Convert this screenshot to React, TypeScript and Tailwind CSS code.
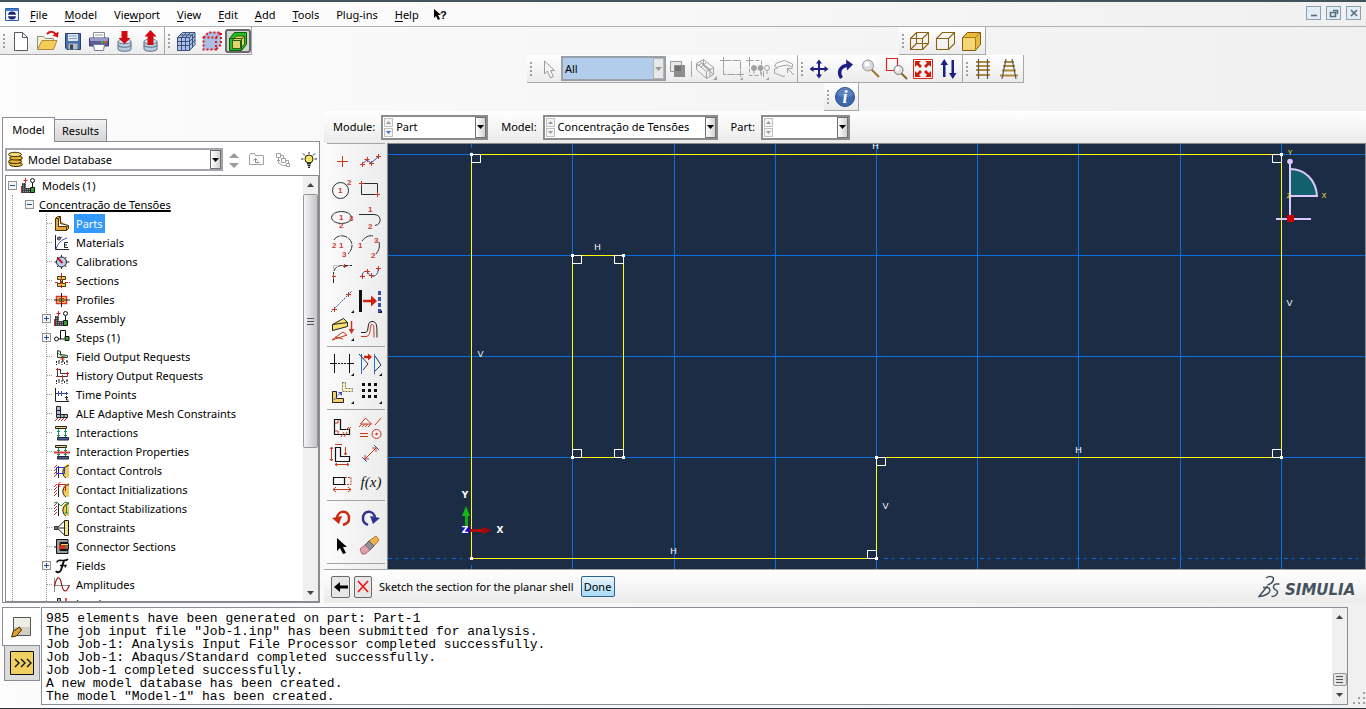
import React from "react";

type IconProps = { children: React.ReactNode; size?: number; className?: string };

function Pic({ children, size = 24, className = "" }: IconProps) {
  return (
    <svg
      width={size}
      height={size}
      viewBox={`0 0 ${size} ${size}`}
      fill="none"
      stroke="none"
      aria-hidden="true"
      className={`shrink-0 ${className}`}
    >
      {children}
    </svg>
  );
}

/* ---------- shared bits ---------- */

function Grip() {
  return (
    <span className="flex w-2 shrink-0 flex-col items-center justify-center gap-[2px]">
      <i className="size-[2px] bg-[#a0a0a0]" />
      <i className="size-[2px] bg-[#a0a0a0]" />
      <i className="size-[2px] bg-[#a0a0a0]" />
      <i className="size-[2px] bg-[#a0a0a0]" />
    </span>
  );
}

type Tool = { name: string; icon: React.ReactNode; pressed?: boolean };

function ToolButton({ tool }: { tool: Tool }) {
  return (
    <button
      type="button"
      title={tool.name}
      aria-label={tool.name}
      className={
        tool.pressed
          ? "flex h-6 w-[26px] items-center justify-center rounded-[3px] border-2 border-[#6a6a6a] bg-[#d4d4d4]"
          : "flex h-6 w-[26px] items-center justify-center"
      }
    >
      <Pic className="shrink-0">{tool.icon}</Pic>
    </button>
  );
}

function ToolGroup({ tools, children }: { tools: Tool[]; children?: React.ReactNode }) {
  return (
    <div className="flex h-7 items-center border-r border-b border-[#a8a8a8] bg-gradient-to-b from-white to-[#ebebeb]">
      <Grip />
      {children}
      {tools.map((t) => (
        <ToolButton key={t.name} tool={t} />
      ))}
    </div>
  );
}

function DropArrow({ muted = false }: { muted?: boolean }) {
  return (
    <span
      className={
        muted
          ? "flex w-[11px] shrink-0 items-center justify-center border border-[#b5b5b5] bg-[#e8e8e8]"
          : "flex w-[11px] shrink-0 items-center justify-center border border-[#707070] bg-gradient-to-r from-white to-[#d2d2d2]"
      }
    >
      <svg width="7" height="4" viewBox="0 0 7 4" aria-hidden="true">
        <path d="M0 0h7L3.500 4z" fill={muted ? "#9a9a9a" : "#000"} />
      </svg>
    </span>
  );
}

function Spinner({ active = false }: { active?: boolean }) {
  return (
    <span className="my-[1px] ml-[1px] flex w-[9px] shrink-0 flex-col gap-[1px]">
      <span className="flex flex-1 items-center justify-center border border-[#c0c0c0] bg-[#f4f4f4]">
        <svg width="5" height="3" aria-hidden="true">
          <path d="M0 3h5L2.500 0z" fill="#9a9a9a" />
        </svg>
      </span>
      <span className="flex flex-1 items-center justify-center border border-[#c0c0c0] bg-[#f4f4f4]">
        <svg width="5" height="3" aria-hidden="true">
          <path d="M0 0h5L2.500 3z" fill={active ? "#3d6fd0" : "#9a9a9a"} />
        </svg>
      </span>
    </span>
  );
}

/* ---------- toolbar icons ---------- */

const cubeWire = (
  <g stroke="#8a6210" strokeWidth="1.1">
    <path d="M2.500 9.500h12v11h-12zM8.500 3.500h12v11h-12zM2.500 9.500l6-6M14.500 9.500l6-6M2.500 20.500l6-6M14.500 20.500l6-6" />
  </g>
);
const cubeHidden = (
  <g stroke="#8a6210" strokeWidth="1.1">
    <path d="M2.500 9.500h12v11h-12zM2.500 9.500l6-6h12v11l-6 6M14.500 9.500l6-6" />
  </g>
);
const database = (
  <>
    <path d="M5 13v7c0 3 13 3 13 0v-7z" fill="#b9cde0" />
    <ellipse cx="11.500" cy="12.500" rx="6.500" ry="2.300" fill="#dde8f2" stroke="#6d8296" />
    <path d="M5 12.500v7.500c0 3 13 3 13 0v-7.500M5 16c0 3 13 3 13 0" stroke="#5b6f82" />
  </>
);

const fileTools: Tool[] = [
  {
    name: "New",
    icon: <path d="M5.500 3.500h8l5 5v13h-13zM13.500 3.500v5h5" fill="#fff" stroke="#5c5c66" />,
  },
  {
    name: "Open",
    icon: (
      <>
        <path d="M2.500 20V7.500h6l2 2h8V13" fill="#fdf3cf" stroke="#8c8c8c" />
        <path d="M2.500 20.500l4.500-9h15l-3.500 9z" fill="#f5cd55" stroke="#a98e43" />
        <path d="M12 5c3-3 7-3 9 1" stroke="#d11" strokeWidth="2" />
        <path d="M17.500 6.500l5.500 2 .5-6z" fill="#d11" />
      </>
    ),
  },
  {
    name: "Save",
    icon: (
      <>
        <path d="M4.500 4.500h15v16H6l-1.500-1.500z" fill="#4a6ea8" stroke="#27406c" />
        <path d="M7 5h10v7H7z" fill="#dfe8f0" />
        <path d="M8 7h8M8 9.500h8" stroke="#8ba0b8" />
        <path d="M7.500 14.500h9v6h-9z" fill="#b5bcc4" />
        <path d="M9 15.500h3v5H9z" fill="#39434f" />
      </>
    ),
  },
  {
    name: "Print",
    icon: (
      <>
        <path d="M6.500 3.500h11v6h-11z" fill="#fff" stroke="#8c8c96" />
        <path d="M8 6h8" stroke="#999" />
        <path d="M2.500 9h19v8h-19z" fill="#5a5c9c" stroke="#3a3b72" />
        <path d="M3 9h18v3H3z" fill="#9a9bc8" />
        <path d="M14 13h2" stroke="#2c2" strokeWidth="2" />
        <path d="M17 13h2" stroke="#f50" strokeWidth="2" />
        <path d="M6.500 15.500h11l-1 6h-9z" fill="#fff" stroke="#77779a" />
      </>
    ),
  },
  {
    name: "Open session",
    icon: (
      <>
        {database}
        <path d="M8.500 2h6v7h3l-6 6-6-6h3z" fill="#d40a12" />
      </>
    ),
  },
  {
    name: "Save session",
    icon: (
      <>
        {database}
        <path d="M11.500 1l6 6.500h-3V16h-6V7.500h-3z" fill="#d40a12" />
      </>
    ),
  },
];

const meshTools: Tool[] = [
  {
    name: "Mesh solid",
    icon: (
      <>
        <path d="M3 8.500l5-5h13v12l-5 6H3z" fill="#a9c1ea" />
        <path
          d="M3.500 8.500h12v13h-12zM3.500 8.500l5-5h12.500v12l-5.500 6M15.500 8.500l5.500-5M7.500 8.500v13M11.500 8.500v13M3.500 12.500h12l5.500-5.500M3.500 16.500h12l5.500-5.500M7.500 8.500l5-5M11.500 8.500l5-5M6 6h12.500v12.500"
          stroke="#30446e"
          strokeWidth=".9"
        />
      </>
    ),
  },
  {
    name: "Mesh nodes",
    icon: (
      <>
        <path d="M3 8l5-5h13v12l-5 6H3z" fill="#a9bfe8" />
        <path
          d="M3.500 8.500h12.500v12h-12.500zM3.500 8.500l5-5h12.500v12l-5 5M16 8.500l5-5"
          stroke="#e01818"
          strokeWidth="2"
          strokeDasharray="2 2"
        />
      </>
    ),
  },
  {
    name: "Perspective cube",
    pressed: true,
    icon: (
      <>
        <path d="M3.500 9.500l5-6h12v12l-5 6h-12z" fill="#1fc01f" stroke="#0a5a0a" />
        <path d="M6.500 11.500l4-4.500h8v8l-4 4.500h-8z" fill="#e3d46c" stroke="#3a5a10" />
        <path d="M6.500 11.500h8v8M14.500 11.500l4-4.500M3.500 9.500h12v12" stroke="#245a12" />
      </>
    ),
  },
];

const renderTools: Tool[] = [
  { name: "Wireframe", icon: cubeWire },
  { name: "Hidden", icon: cubeHidden },
  {
    name: "Shaded",
    icon: (
      <>
        <path d="M2.500 8.500l5-5h13v12l-5 6h-13z" fill="#e8b93c" stroke="#7d5a10" />
        <path d="M3 9h12v12H3z" fill="#f6d672" />
        <path d="M2.500 8.500h13v13M15.500 8.500l5-5" stroke="#a87a1c" />
      </>
    ),
  },
];

const selectionTools: Tool[] = [
  {
    name: "Select edges",
    icon: (
      <g stroke="#a2a2a2">
        <path d="M2.500 6.500l7-4 10 8v7l-7 4-10-9z" />
        <path d="M2.500 6.500l10 8 7-4M12.500 14.500v7M6 4.500l10 8v7M2.500 9.500l5-3 9 7M9.500 2.500v6l10 9M7 10l5-4" />
        <path d="M23 19v4h-4z" fill="#a2a2a2" stroke="none" />
      </g>
    ),
  },
  {
    name: "Drag rectangle",
    icon: (
      <g stroke="#a2a2a2">
        <path d="M3.500 3.500h17v14h-17z" strokeDasharray="8 1" />
        <path d="M0 3.500h6M3.500 0v7M17 17.500h7M20.500 14v6" />
        <path d="M23 20v3h-3z" fill="#a2a2a2" stroke="none" />
      </g>
    ),
  },
  {
    name: "Select inside",
    icon: (
      <g stroke="#a2a2a2">
        <path d="M3.500 3.500h12v15h-12z" strokeDasharray="4 2" />
        <path d="M0 3.500h6M3.500 0v7M17.500 14v6" />
        <circle cx="8" cy="11" r="2.500" fill="#a2a2a2" />
        <circle cx="14.500" cy="11" r="2.500" fill="#a2a2a2" />
        <circle cx="21" cy="11" r="2.500" />
        <path d="M8 13v4M14.500 13v4M21 14v3" />
        <path d="M23 20v3h-3z" fill="#a2a2a2" stroke="none" />
      </g>
    ),
  },
  {
    name: "Pick from view",
    icon: (
      <g stroke="#a2a2a2">
        <path d="M11 19.500l-8.500-3.500v-4l3-1-3-2 2-3 8-2.500 8 3.500v3l-6-2-9 2M11 19.500l2-1" />
        <path d="M22 18l-6-6M15.500 16v-4.500h5" />
      </g>
    ),
  },
];

const viewTools: Tool[] = [
  {
    name: "Pan",
    icon: (
      <g fill="#1b1f86">
        <path d="M11 5h2v14h-2z" />
        <path d="M5 11h14v2H5z" />
        <path d="M12 2.500l3 4H9zM12 21.500l3-4H9zM2.500 12l4-3v6zM21.500 12l-4-3v6z" />
      </g>
    ),
  },
  {
    name: "Rotate",
    icon: (
      <>
        <path d="M8.500 21c-4-6-1.500-12 7-13" stroke="#1b1f86" strokeWidth="3.500" />
        <path d="M13 2.500l7 5-6 6z" fill="#1b1f86" />
      </>
    ),
  },
  {
    name: "Magnify",
    icon: (
      <>
        <path d="M12 12l8 8" stroke="#a07428" strokeWidth="2" />
        <circle cx="9" cy="8.500" r="5.500" fill="#dadada" stroke="#9a9a9a" />
        <circle cx="8" cy="7" r="2.500" fill="#fff" />
      </>
    ),
  },
  {
    name: "Box zoom",
    icon: (
      <>
        <path d="M1.500 1.500h11v12h-11z" stroke="#e0281c" strokeWidth="1.200" />
        <path d="M16 16l6 6" stroke="#8a6424" strokeWidth="2" />
        <circle cx="13.500" cy="13" r="4.500" fill="#e2e2e2" stroke="#777" />
        <circle cx="12.500" cy="12" r="2" fill="#fff" />
      </>
    ),
  },
  {
    name: "Auto fit",
    icon: (
      <>
        <path d="M2.500 2.500h19v19h-19z" stroke="#d32a1c" />
        <path
          d="M4 4h6L8 6l3 3-2 2-3-3-2 2zM20 4h-6l2 2-3 3 2 2 3-3 2 2zM4 20h6l-2-2 3-3-2-2-3 3-2-2zM20 20h-6l2-2-3-3 2-2 3 3 2-2z"
          fill="#cf1a0c"
        />
      </>
    ),
  },
  {
    name: "Cycle views",
    icon: (
      <g fill="#1b1f86">
        <path d="M6 6h2.500v14H6z" />
        <path d="M7.250 2l3.750 6h-7.500z" />
        <path d="M14.500 3H17v14h-2.500z" />
        <path d="M15.750 22l3.750-6H12z" />
      </g>
    ),
  },
];

const projectionTools: Tool[] = [
  {
    name: "Parallel",
    icon: (
      <>
        <path d="M4 5h14M4 9h14M4 13h14M4 18h14" stroke="#b08a3c" strokeWidth="2" />
        <path d="M6.500 2v20M15.500 2v20" stroke="#555" strokeWidth="1.200" />
      </>
    ),
  },
  {
    name: "Perspective",
    icon: (
      <>
        <path d="M6 5h10M5 9h12M4 13.500h14M2 18.500h18" stroke="#b08a3c" strokeWidth="2" />
        <path d="M8 2L4 22M14 2l4 20" stroke="#555" strokeWidth="1.200" />
      </>
    ),
  },
];

const infoTools: Tool[] = [
  {
    name: "Query information",
    icon: (
      <>
        <circle cx="12" cy="12" r="9.500" fill="#3f69ae" stroke="#2b4b88" />
        <path d="M4 10a8 7 0 0116 0c-4 3-12 3-16 0z" fill="#5b80c0" />
        <text
          x="12"
          y="18"
          textAnchor="middle"
          fill="#fff"
          fontSize="18"
          fontStyle="italic"
          fontWeight="bold"
          fontFamily="Liberation Serif, serif"
        >
          i
        </text>
      </>
    ),
  },
];

/* ---------- model tree ---------- */

const asm = (
  <>
    <path d="M1 5h4v5h5v5H1z" fill="#8a8a92" />
    <path d="M1.500 5v10M3.500 5v10M5.500 10v5M7.500 10v5M9.500 11v4M1 6.500h4M1 8.500h4M1 10.500h9M1 12.500h9M1 14.500h9" stroke="#33333a" strokeWidth=".8" />
    <path d="M4.500 0v5M2.500 2.500h4M.5 8v7" stroke="#c22" />
    <circle cx="11.500" cy="2.500" r="2" stroke="#111" />
    <path d="M11.500 5v5" stroke="#111" />
    <path d="M9.500 9.500h4v5h-4z" fill="#37a02a" stroke="#111" />
  </>
);
const contact = (
  <>
    <path d="M15 1c-9 1-9 14 0 14z" fill="#f1cc58" />
    <path d="M15 2.500c-7 1-8 10-3 12.500M4.500 3v12" stroke="#222" />
    <path d="M0 5l3-3M0 8l3-3M0 11l3-3M0 14l3-3" stroke="#b33" />
  </>
);
const inter = (
  <>
    <path d="M1.500 1.500h11v2h-11z" fill="#f0d878" stroke="#222" />
    <path d="M3.500 12.500h11v2.500h-11z" fill="#4760a8" stroke="#222" />
    <path d="M4.500 4v8M11.500 4v8M3 6.500h3M10 6.500h3M3 10.500h3M10 10.500h3" stroke="#169060" />
  </>
);
const requests = (
  <path d="M4 12h2M8 12h2M12 12h2M2.500 12v4M5 13v3M8 12v4M10.500 13v3M13 12v4" stroke="#222" strokeDasharray="2 1" />
);

type Node = { label: string; icon: React.ReactNode; expandable?: boolean; selected?: boolean };

const nodes: Node[] = [
  {
    label: "Parts",
    selected: true,
    icon: (
      <path
        d="M1.500 2.500l2-2h3v7l8 2v3l-2 2H1.500zM1.500 2.500h3v8h8l2-1M4.500 2.500l2-2M12.500 10.500v4"
        fill="#e2a63c"
        stroke="#4a3208"
      />
    ),
  },
  {
    label: "Materials",
    icon: (
      <>
        <path d="M1.500 0v14.500H15" stroke="#223" />
        <path d="M2 14C4 8 7 5 13 3M3 4l5-2" stroke="#3c50a8" />
        <circle cx="5" cy="3.500" r="1.500" stroke="#222" />
        <path d="M14 7.500h-3.500v5H14M10.500 10H13" stroke="#222" />
      </>
    ),
  },
  {
    label: "Calibrations",
    icon: (
      <>
        <circle cx="7.500" cy="8" r="5" fill="#b9cdf0" stroke="#222" />
        <path d="M7.500 1v2M7.500 13v2M.5 8h2M12.500 8h3M3 3l1.500 1.500M11 4.500L12.500 3M3 13l1.500-1.500M12.500 13L11 11.500" stroke="#222" />
        <path d="M3.500 4l5 5" stroke="#c81c1c" strokeWidth="2" />
      </>
    ),
  },
  {
    label: "Sections",
    icon: (
      <>
        <path d="M3.500 3.500h8v3h-3v4h3v3h-8v-3h3v-4h-3z" fill="#f0c84c" stroke="#4a3a10" />
        <path d="M7.500 0v16M11 9.500h5M1 9.500h3" stroke="#d02020" strokeDasharray="3 1" />
      </>
    ),
  },
  {
    label: "Profiles",
    icon: (
      <>
        <path d="M2.500 4.500h10v7h-10z" fill="#f4d878" stroke="#d83828" strokeWidth="1.500" />
        <path d="M7.500 1v14M0 8h16" stroke="#222" />
        <path d="M5 6.500h5v3H5z" stroke="#a85018" />
      </>
    ),
  },
  { label: "Assembly", icon: asm, expandable: true },
  {
    label: "Steps (1)",
    expandable: true,
    icon: (
      <>
        <circle cx="2.500" cy="9" r="2" stroke="#111" />
        <path d="M4.500 9h6M6.500 9V.5h5v7" stroke="#111" />
        <path d="M11 6.500h4v4h-4z" fill="#37a02a" stroke="#111" />
      </>
    ),
  },
  {
    label: "Field Output Requests",
    icon: (
      <>
        <path d="M3.500 1.500l3 1v3l7 1v2h-10z" fill="#f0f0f0" stroke="#333" />
        <path d="M4 4l3 3 5 1" stroke="#28a038" />
        <path d="M8.500 7v5M6.500 10h4" stroke="#d02020" />
        {requests}
      </>
    ),
  },
  {
    label: "History Output Requests",
    icon: (
      <>
        <path d="M3.500 1.500h3v4h7v3h-10z" stroke="#333" />
        <path d="M2 1.500h3M2 8.500h3M12 5.500h3M13.500 4v5M8.500 7v4M3.500 0v3" stroke="#d02020" />
        {requests}
      </>
    ),
  },
  {
    label: "Time Points",
    icon: (
      <>
        <path d="M1.500 1v13.500H15" stroke="#222" />
        <path d="M2 6.500h12M4.500 4v5M7.500 4v5M12.500 5v3" stroke="#3048b0" />
        <path d="M12.500 9v4h2M11 10.500h3" stroke="#222" />
      </>
    ),
  },
  {
    label: "ALE Adaptive Mesh Constraints",
    icon: (
      <>
        <path d="M2.500.5h4v8h7v3h-11z" fill="#a8bcd4" stroke="#222" />
        <path d="M2.500 4.500h4M2.500 8.500h4v3M10 8.500v3" stroke="#222" />
        <path d="M1 15l3-3M4 15l3-3M7 15l3-3M10 15l3-3" stroke="#c03030" />
      </>
    ),
  },
  { label: "Interactions", icon: inter },
  {
    label: "Interaction Properties",
    icon: (
      <>
        {inter}
        <path d="M0 8.500h16" stroke="#d23c3c" strokeWidth="2" />
      </>
    ),
  },
  {
    label: "Contact Controls",
    icon: (
      <>
        {contact}
        <path d="M2.500 4.500h8v6h-8z" stroke="#3434d0" />
      </>
    ),
  },
  {
    label: "Contact Initializations",
    icon: (
      <>
        {contact}
        <path d="M4 2.500h8M6.500 0L4 2.500 6.500 5M11.500 2v7" stroke="#d02020" />
      </>
    ),
  },
  {
    label: "Contact Stabilizations",
    icon: (
      <>
        {contact}
        <path d="M0 2l3-1 4 4 4-4 4 1M12.500 3v9M10.500 12h4" stroke="#189048" />
      </>
    ),
  },
  {
    label: "Constraints",
    icon: (
      <>
        <path d="M10.500.5h4v15h-4z" fill="#f6e27c" stroke="#222" />
        <path d="M10.500 1L3 8l7.500 7M3 8h8" stroke="#222" />
        <path d="M.5 6.500h3v3h-3z" fill="#8090a8" stroke="#222" />
      </>
    ),
  },
  {
    label: "Connector Sections",
    icon: (
      <>
        <path d="M14 .5H2.500v14H14v-3H6v-8h8v-3z" fill="#9a9ea6" stroke="#111" />
        <path d="M6.500 4.500h8v6h-8z" fill="#f0d078" stroke="#111" />
        <path d="M5 6h6v4H5z" fill="#d03018" />
        <path d="M0 8h3M11 7h4M11 9h4" stroke="#111" />
      </>
    ),
  },
  {
    label: "Fields",
    expandable: true,
    icon: (
      <>
        <path d="M3 4.500c0-3 4-2 6-2 3 0 4 0 5-1.500" stroke="#111" strokeWidth="1.600" />
        <path d="M10 2.500L7 12c-1 2.500-4 3-5 1" stroke="#111" strokeWidth="2" />
        <path d="M6 7.500h6l-1 2" stroke="#111" strokeWidth="1.300" />
      </>
    ),
  },
  {
    label: "Amplitudes",
    icon: (
      <>
        <path d="M.5 1v14M0 8.500h15" stroke="#8a8a8a" />
        <path d="M.5 9C3-2 6-1 7.500 7S12 17 15.500 8" stroke="#a02020" strokeWidth="1.300" />
      </>
    ),
  },
  {
    label: "Loads",
    icon: (
      <>
        <path d="M3.500 2.500h3v12h-3z" fill="#a8bcd4" stroke="#222" />
        <path d="M12 2v10M9 6h6" stroke="#d02020" strokeWidth="1.500" />
      </>
    ),
  },
];

function Expander({ open }: { open: boolean }) {
  return (
    <svg width="9" height="9" className="relative shrink-0" aria-hidden="true" shapeRendering="crispEdges">
      <path d="M.5.5h8v8h-8z" fill="#f4f4f4" stroke="#919191" />
      <path d={open ? "M2 4.500h5" : "M2 4.500h5M4.500 2v5"} stroke="#2a4a9a" />
    </svg>
  );
}

function ModelTree() {
  return (
    <div className="flex min-h-0 flex-1 border border-[#8a8a8a] bg-white">
      <ul role="tree" aria-label="Model tree" className="min-h-0 flex-1 overflow-hidden">
        <li role="treeitem" aria-expanded="true">
          <div className="flex h-[19px] items-center pl-[2px]">
            <Expander open />
            <Pic size={16} className="mr-[5px] ml-1">{asm}</Pic>
            <span>Models (1)</span>
          </div>
          <ul role="group" className="ml-[6px] border-l border-dotted border-[#9a9a9a]">
            <li role="treeitem" aria-expanded="true">
              <div className="flex h-[19px] items-center pl-3">
                <Expander open />
                <span className="ml-[5px] underline decoration-2 underline-offset-1 [text-decoration-skip-ink:none]">
                  Concentração de Tensões
                </span>
              </div>
              <ul role="group" className="ml-[33px] border-l border-dotted border-[#9a9a9a]">
                {nodes.map((n) => (
                  <li
                    key={n.label}
                    role="treeitem"
                    aria-selected={!!n.selected}
                    className="flex h-[19px] items-center"
                  >
                    <span className="-ml-[5px] flex w-3 items-center">
                      {n.expandable ? (
                        <Expander open={false} />
                      ) : (
                        <i className="ml-[5px] w-[5px] border-t border-dotted border-[#9a9a9a]" />
                      )}
                    </span>
                    <Pic size={16} className="mr-1">{n.icon}</Pic>
                    <span
                      className={
                        n.selected
                          ? "bg-[#3399ff] px-[2px] leading-[19px] text-white"
                          : "px-[2px] leading-[19px] whitespace-nowrap"
                      }
                    >
                      {n.label}
                    </span>
                  </li>
                ))}
              </ul>
            </li>
          </ul>
        </li>
      </ul>
      <div className="flex w-[15px] flex-col bg-[#f0f0f0]">
        <span className="flex h-[18px] items-center justify-center">
          <svg width="7" height="4" aria-hidden="true"><path d="M0 4h7L3.500 0z" fill="#444" /></svg>
        </span>
        <span className="flex flex-[255] flex-col items-center justify-center gap-[2px] rounded-[2px] border border-[#979797] bg-gradient-to-r from-[#f5f5f5] to-[#c4c4c8]">
          <i className="h-[1px] w-[7px] bg-[#555]" />
          <i className="h-[1px] w-[7px] bg-[#555]" />
          <i className="h-[1px] w-[7px] bg-[#555]" />
        </span>
        <span className="flex-[137]" />
        <span className="flex h-[17px] items-center justify-center">
          <svg width="7" height="4" aria-hidden="true"><path d="M0 0h7L3.500 4z" fill="#444" /></svg>
        </span>
      </div>
    </div>
  );
}

function LeftPanel() {
  return (
    <aside className="flex w-[318px] shrink-0 flex-col pt-[6px]">
      <div role="tablist" className="flex items-end">
        <button
          type="button"
          role="tab"
          aria-selected="true"
          className="relative z-10 -mb-[1px] h-[25px] w-[53px] border border-b-0 border-[#8c8c96] bg-white"
        >
          Model
        </button>
        <button
          type="button"
          role="tab"
          aria-selected="false"
          className="h-[22px] w-[52px] border border-b-0 border-l-0 border-[#8c8c96] bg-gradient-to-b from-[#f2f2f2] to-[#d6d6d6]"
        >
          Results
        </button>
      </div>
      <div className="flex min-h-0 flex-1 flex-col border border-[#8c8c96] bg-white pt-[6px] pl-[2px]">
        <div className="mb-1 flex h-[23px] shrink-0 items-center">
          <div className="flex h-[23px] w-[218px] border-2 border-[#a4a4ac] bg-white">
            <Pic size={18}>
              <path d="M2 10l3-2 10 1-1 7-10-1-3-2z" fill="#c8941c" />
              <g stroke="#3c2c04" fill="#e9b93a">
                <ellipse cx="9" cy="14.500" rx="6.500" ry="2" />
                <ellipse cx="8" cy="11.500" rx="6.500" ry="2" />
                <ellipse cx="9" cy="8" rx="6.500" ry="2" />
                <ellipse cx="8" cy="4.500" rx="6.500" ry="2.200" fill="#f6da7a" />
              </g>
            </Pic>
            <select aria-label="Tree source" className="min-w-0 flex-1 appearance-none bg-transparent pl-[3px]">
              <option>Model Database</option>
            </select>
            <DropArrow />
          </div>
          <div className="flex flex-1 items-center justify-between pr-[2px] pl-[6px]">
            <button type="button" aria-label="Move item">
              <svg width="10" height="16" aria-hidden="true">
                <path d="M0 6h10L5 1zM0 11h10l-5 5z" fill="#9a9a9a" />
              </svg>
            </button>
            <button type="button" aria-label="Up one level">
              <Pic size={16}>
                <path d="M.5 12.500v-9l1-2h4l1 2h8v9z" stroke="#a0a0a0" />
                <path d="M10.500 10.500h-4v-4M4.500 8.500l2-2 2 2" stroke="#8a8a8a" />
              </Pic>
            </button>
            <button type="button" aria-label="Show filter">
              <Pic size={16}>
                <path d="M1.500 1.500h4v4h-4zM6.500 6.500h4v4h-4zM11.500 11.500h3v3h-3zM5.500 3.500h3v3M10.500 8.500h3v3M3.500 6v5l4 2.500h4M2 8.500h3" stroke="#a0a0a0" />
              </Pic>
            </button>
            <button type="button" aria-label="Tips">
              <Pic size={16}>
                <circle cx="8" cy="7" r="4" fill="#f6e45c" stroke="#222" />
                <path d="M6 11.500h4M6.500 13.500h3M7 15.500h2" stroke="#222" strokeWidth="1.500" />
                <path d="M8 0v2M0 7h2.500M13.500 7H16M2 1.500l2 2M14 1.500l-2 2" stroke="#222" />
              </Pic>
            </button>
          </div>
        </div>
        <ModelTree />
      </div>
    </aside>
  );
}

/* ---------- sketch toolbox ---------- */

function Num({ x, y, children }: { x: number; y: number; children: string }) {
  return (
    <text x={x} y={y} fill="#cc3a3a" fontSize="8" fontWeight="bold" fontFamily="Liberation Sans, sans-serif">
      {children}
    </text>
  );
}

const corner = <path d="M26 23v3h-3z" fill="#111" />;

const toolbox: { name: string; icon: React.ReactNode }[][] = [
  [
    { name: "Isolated point", icon: <path d="M14.500 9v11M9 14.500h11" stroke="#d03a1c" /> },
    {
      name: "Connected lines",
      icon: (
        <>
          <path d="M6 17l5-4 4 3 7-6" stroke="#3850b0" />
          <path d="M4 17.500h5M6.500 15v5M8.500 12.500h5M11.500 10v5M13 16.500h5M15.500 14v5M20 9.500h5M22.500 7v5" stroke="#c83a20" />
        </>
      ),
    },
    {
      name: "Circle",
      icon: (
        <>
          <circle cx="12.500" cy="15.500" r="8" stroke="#223030" />
          <Num x={10} y={18}>1</Num>
          <Num x={19} y={10}>2</Num>
        </>
      ),
    },
    {
      name: "Rectangle",
      icon: (
        <>
          <path d="M5.500 8.500h16v11h-16z" stroke="#223030" />
          <path d="M3 8.500h5M5.500 6v5M19 19.500h5M21.500 17v5" stroke="#c83a20" />
        </>
      ),
    },
    {
      name: "Ellipse",
      icon: (
        <>
          <ellipse cx="13.500" cy="14.500" rx="10" ry="6" stroke="#223030" />
          <Num x={11} y={17}>1</Num>
          <Num x={11} y={25}>2</Num>
          <Num x={21} y={18}>3</Num>
        </>
      ),
    },
    {
      name: "Tangent arc",
      icon: (
        <>
          <path d="M3 11.500h15c8 0 8 10 1 11" stroke="#223030" />
          <Num x={12} y={9}>1</Num>
          <Num x={12} y={26}>2</Num>
        </>
      ),
    },
    {
      name: "Arc from centre",
      icon: (
        <>
          <path d="M6 9c4-7 17-5 18 5 0 4-2 7-4 9" stroke="#223030" strokeDasharray="7 1" />
          <Num x={4} y={17}>2</Num>
          <Num x={11} y={17}>1</Num>
          <Num x={14} y={26}>3</Num>
        </>
      ),
    },
    {
      name: "Arc through points",
      icon: (
        <>
          <path d="M6 10c3-4 7-6 11-5M23 11c1 5 0 8-3 12" stroke="#223030" />
          <Num x={2} y={17}>1</Num>
          <Num x={18} y={12}>3</Num>
          <Num x={15} y={27}>2</Num>
        </>
      ),
    },
    {
      name: "Fillet",
      icon: (
        <>
          <path d="M5.500 24v-9c0-5 3-8 8-8.500H24" stroke="#223030" strokeDasharray="5 1" />
          <path d="M5.500 6.500h4M5.500 6.500v4" stroke="#bbb" />
          <path d="M4 17.500h4M5.500 15v5M15 7.500h4M16.500 5v4" stroke="#c83a20" />
        </>
      ),
    },
    {
      name: "Spline",
      icon: (
        <>
          <path d="M6 17c1-6 5-6 7-2s10 3 9-6" stroke="#3850b0" />
          <path d="M4 17.500h5M6.500 15v5M9 12.500h5M11.500 10v5M13 16.500h5M15.500 14v5M20 9.500h5M22.500 7v5" stroke="#c83a20" />
        </>
      ),
    },
    {
      name: "Construction line",
      icon: (
        <>
          <path d="M3 25L24 4" stroke="#3850b0" strokeDasharray="2 1" />
          <path d="M4 22.500h5M6.500 20v5M18 7.500h5M20.500 5v5" stroke="#c83a20" />
          {corner}
        </>
      ),
    },
    {
      name: "Offset reference",
      icon: (
        <>
          <path d="M4.500 3v22" stroke="#111" strokeWidth="3" />
          <path d="M23.500 4v22" stroke="#3850b0" strokeWidth="3" strokeDasharray="4 2" />
          <path d="M7 14h10" stroke="#d2200c" strokeWidth="2.500" />
          <path d="M15 8.500l6 5.500-6 5.500z" fill="#d2200c" />
          {corner}
        </>
      ),
    },
    {
      name: "Project edges",
      icon: (
        <>
          <path d="M4.500 9.500l11-6 4 4v4l-15 4z" fill="#f6e070" stroke="#222" />
          <path d="M4.500 9.500l15-2" stroke="#222" />
          <path d="M4 25l11-8 4 3zM7 22l8 2" stroke="#c83a20" />
          <path d="M23.500 6v11" stroke="#c83a20" strokeWidth="1.500" />
          <path d="M20.500 14h6l-3 5z" fill="#c83a20" />
          {corner}
        </>
      ),
    },
    {
      name: "Offset curves",
      icon: (
        <>
          <path d="M5 17.500h4c5 0 1-11 7-11 5 0 5 4 5 16" stroke="#222" />
          <path d="M5 21.500h5c6 0 3-12 6-12 2 0 2 3 2 13" stroke="#c83a20" />
        </>
      ),
    },
  ],
  [
    {
      name: "Trim",
      icon: (
        <>
          <path d="M6.500 4v19M21.500 4v19M2 13.500h5M21 13.500h5" stroke="#111" />
          <path d="M7 13.500h15" stroke="#111" strokeDasharray="2 1" />
          {corner}
        </>
      ),
    },
    {
      name: "Mirror",
      icon: (
        <>
          <path d="M5.500 4v20M18.500 4v20" stroke="#2070d0" />
          <path d="M3 4l9 10-5 6M19 6l6 9-6 6" stroke="#334" />
          <path d="M8 7h5" stroke="#d2200c" strokeWidth="2.500" />
          <path d="M12 3.500l4 3.500-4 3.500z" fill="#d2200c" />
          {corner}
        </>
      ),
    },
    {
      name: "Translate",
      icon: (
        <>
          <path d="M4.500 13.500h4v7h7v4h-11z" fill="#f2d268" stroke="#222" />
          <path d="M14.500 4.500h3v6h7v3h-10z" fill="#fbf3c0" stroke="#776" strokeDasharray="2 1" />
          <path d="M6 22l7-8" stroke="#3850b0" strokeDasharray="2 1" />
          <path d="M10 14h4v4z" fill="#3850b0" />
          {corner}
        </>
      ),
    },
    {
      name: "Linear pattern",
      icon: (
        <>
          <path d="M6 5h3v3H6zM12 5h3v3h-3zM18 5h3v3h-3zM6 11h3v3H6zM12 11h3v3h-3zM18 11h3v3h-3zM6 17h3v3H6zM12 17h3v3h-3zM18 17h3v3h-3z" fill="#111" />
          {corner}
        </>
      ),
    },
  ],
  [
    {
      name: "Auto constrain",
      icon: (
        <>
          <path d="M6.500 6.500h6v10h9v5h-15z" stroke="#111" strokeWidth="1.200" />
          <path d="M7 10h3V7M7 18h3v3M13 24l3-5M16 24l3-5M18 17l3-3M20 17l3-3" stroke="#c83a20" />
        </>
      ),
    },
    {
      name: "Add constraint",
      icon: (
        <>
          <path d="M9.500 5l-5 6h11zM3 14l3-3M6 14l3-3M9 14l3-3M12 14l3-3M19 12l6-7M4 20.500h8M4 23.500h8" stroke="#c83a20" />
          <circle cx="20.500" cy="21" r="4.500" stroke="#c83a20" />
          <circle cx="20.500" cy="21" r="1.200" fill="#c83a20" />
        </>
      ),
    },
    {
      name: "Auto dimension",
      icon: (
        <>
          <path d="M7.500 6.500h5v9h9v5h-14z" stroke="#111" strokeWidth="1.200" />
          <path d="M3.500 6v14M2 8l1.500-2L5 8M2 18l1.500 2L5 18M7 3.500h7M17.500 6v8M7 23.500h14M9 22l-2 1.500L9 25M19 22l2 1.500-2 1.500M16 12l1.500 2 1.500-2" stroke="#c83a20" />
        </>
      ),
    },
    {
      name: "Add dimension",
      icon: (
        <>
          <path d="M9 18L20 7M9 14v4h4M16 7h4v4" stroke="#c83a20" />
          <path d="M6 16l5 5M18 4l5 5" stroke="#3850b0" />
        </>
      ),
    },
    {
      name: "Edit dimension",
      icon: (
        <>
          <path d="M5.500 8.500h11v7h-11z" stroke="#111" strokeWidth="1.200" />
          <path d="M17 8.500h6v7h-6" stroke="#c83a20" strokeDasharray="2 1" />
          <path d="M5 20.500h18M8 18l-3 2.500L8 23M20 18l3 2.500-3 2.500" stroke="#c83a20" />
        </>
      ),
    },
    {
      name: "Parameter manager",
      icon: (
        <text
          x="15"
          y="18"
          textAnchor="middle"
          fill="#111"
          fontSize="15"
          fontStyle="italic"
          fontFamily="Liberation Serif, serif"
        >
          f(x)
        </text>
      ),
    },
  ],
  [
    {
      name: "Undo",
      icon: (
        <>
          <path d="M9 14c1-9 13-8 12 1 0 4-3 5-6 6" stroke="#cc2a14" strokeWidth="2.500" />
          <path d="M4 14l10-2-3 8z" fill="#cc2a14" />
        </>
      ),
    },
    {
      name: "Redo",
      icon: (
        <>
          <path d="M19 14c-1-9-13-8-12 1 0 4 3 5 5 6" stroke="#2e3490" strokeWidth="2.500" />
          <path d="M24 14l-10-2 3 8z" fill="#2e3490" />
        </>
      ),
    },
    {
      name: "Select",
      icon: <path d="M9 6v13l3-3 3 6 3-1-3-6h4z" fill="#000" />,
    },
    {
      name: "Delete",
      icon: (
        <>
          <path d="M13 9l7-5 3 4-6 7z" fill="#f2b04c" stroke="#b07828" />
          <path d="M9 13l4-4 5 5-4 4z" fill="#8a929a" stroke="#4c5a66" />
          <path d="M4 17l5-4 5 5-5 4H6z" fill="#e0a0a8" stroke="#a86870" />
        </>
      ),
    },
  ],
];

function Toolbox() {
  return (
    <div className="flex w-[63px] shrink-0 flex-col bg-gradient-to-r from-[#fbfbfb] to-[#ececec] pr-[2px] pl-[3px]">
      {toolbox.map((group, i) => (
        <div key={i} className="grid shrink-0 grid-cols-[28px_28px] border-t border-[#a4a4a4] py-[3px] pl-[1px]">
          {group.map((t) => (
            <button key={t.name} type="button" title={t.name} aria-label={t.name} className="size-7">
              <Pic size={28}>{t.icon}</Pic>
            </button>
          ))}
        </div>
      ))}
      <div className="border-t border-[#a4a4a4]" />
    </div>
  );
}

/* ---------- sketch canvas ---------- */

const gridX = [572, 674, 775, 876, 977, 1078, 1180, 1281];
const gridY = [154, 255, 356, 457];

const squares: [number, number][] = [
  [471, 154],
  [1272, 154],
  [572, 255],
  [614, 255],
  [572, 449],
  [614, 449],
  [1272, 449],
  [876, 457],
  [867, 550],
];
const vertices: [number, number][] = [
  [471, 154],
  [1281, 154],
  [572, 255],
  [623, 255],
  [572, 457],
  [623, 457],
  [876, 457],
  [1281, 457],
  [471, 558],
  [876, 558],
];
const marks: [number, number, string][] = [
  [875, 149, "H"],
  [597, 250, "H"],
  [1078, 453, "H"],
  [673, 554, "H"],
  [480, 357, "V"],
  [885, 509, "V"],
  [1289, 306, "V"],
];

function SketchCanvas() {
  return (
    <div className="min-w-0 flex-1 overflow-hidden border-t border-r border-l border-[#8a8a8a] bg-[#1c2c45]">
      <svg className="block size-full" role="img" aria-label="Planar shell section sketch">
        <g transform="translate(-388 -144)" fill="none">
          <g stroke="#0a6fdc" shapeRendering="crispEdges">
            {gridX.map((x) => (
              <line key={x} x1={x + 0.5} x2={x + 0.5} y1="144" y2="4000" />
            ))}
            {gridY.map((y) => (
              <line key={y} x1="388" x2="6000" y1={y + 0.5} y2={y + 0.5} />
            ))}
            <path d="M471.500 144v10M471.500 565v400" strokeDasharray="4 4 2 6" />
            <path d="M388 558.500h83M884 558.500h5000" strokeDasharray="4 4 2 6" />
          </g>
          <path
            d="M471.500 154.500H1281.500V457.500H876.500V558.500H471.500zM572.500 255.500H623.500V457.500H572.500z"
            stroke="#ffff00"
            shapeRendering="crispEdges"
          />
          <g shapeRendering="crispEdges">
            {squares.map(([x, y]) => (
              <rect key={`${x}-${y}`} x={x + 0.5} y={y + 0.5} width="9" height="8" stroke="#fff" />
            ))}
            {vertices.map(([x, y]) => (
              <rect key={`${x}-${y}`} x={x - 1} y={y - 1} width="3" height="3" fill="#fff" />
            ))}
          </g>
          <g fill="#fff" fontSize="9" fontFamily="Liberation Sans, sans-serif" textAnchor="middle">
            {marks.map(([x, y, t]) => (
              <text key={`${x}-${y}`} x={x + 0.5} y={y}>
                {t}
              </text>
            ))}
          </g>

          <g fontFamily="DejaVu Sans, sans-serif" fontSize="9" fontWeight="bold" fill="#fff" textAnchor="middle">
            <path d="M466.500 527v-14" stroke="#12a812" strokeWidth="3" />
            <path d="M462 516h8l-4-10z" fill="#14b814" />
            <circle cx="466" cy="530" r="4" fill="#0a0ac0" />
            <path d="M470 530.500h14" stroke="#b80808" strokeWidth="3" />
            <path d="M482 527v7l10-3.500z" fill="#a80808" />
            <text x="465" y="498">Y</text>
            <text x="465" y="533">Z</text>
            <text x="500" y="533">X</text>
          </g>

          <g>
            <path d="M1290 169c15 0 26 11 27 27h-27z" fill="#11606c" stroke="#dcc8ff" strokeWidth="2" />
            <path d="M1290 162v56M1276 219h35" stroke="#dcc8ff" strokeWidth="2" />
            <circle cx="1290" cy="161.500" r="2.800" fill="#dcc8ff" />
            <rect x="1287" y="215" width="7" height="7" fill="#d00000" />
            <g fill="#f4f020" fontSize="7" fontFamily="Liberation Sans, sans-serif" textAnchor="middle">
              <text x="1290" y="155">Y</text>
              <text x="1324" y="198">X</text>
              <text x="1289" y="198">Z</text>
            </g>
          </g>
        </g>
      </svg>
    </div>
  );
}

/* ---------- context bar and prompt ---------- */

type Combo = { id: string; label: string; value: string; width: string; active?: boolean };

const combos: Combo[] = [
  { id: "module", label: "Module:", value: "Part", width: "w-[107px]", active: true },
  { id: "model", label: "Model:", value: "Concentração de Tensões", width: "w-[175px]" },
  { id: "part", label: "Part:", value: "", width: "w-[89px]" },
];

function ContextBar() {
  return (
    <div className="flex h-8 shrink-0 items-center gap-[13px] bg-gradient-to-b from-white to-[#ebebeb] pl-[9px]">
      {combos.map((c) => (
        <div key={c.id} className="flex items-center gap-[6px]">
          <label htmlFor={c.id}>{c.label}</label>
          <div className={`flex h-[25px] border-2 border-[#8c8c8c] bg-white ${c.width}`}>
            <Spinner active={c.active} />
            <select id={c.id} className="min-w-0 flex-1 appearance-none bg-transparent pl-[3px]">
              <option>{c.value}</option>
            </select>
            <DropArrow />
          </div>
        </div>
      ))}
    </div>
  );
}

function SimuliaLogo() {
  return (
    <svg width="108" height="26" viewBox="0 0 108 26" role="img" aria-label="3DS Simulia" className="shrink-0">
      <g stroke="#44525e" fill="none" strokeWidth="1.500">
        <path d="M8 4C11 2 15.500 2 15.500 5c0 3-3 5-6 6" />
        <path d="M5 13.500h4c3 0 3.500 3 2 5s-6 3.500-10 4L9.500 12" />
        <path d="M21.500 10h-3c-3 0-4 3-2 5s4 2 3 4-3 3.500-6 3.500" />
      </g>
      <text
        x="27"
        y="21"
        fill="#44525e"
        fontSize="15"
        fontWeight="bold"
        fontStyle="italic"
        fontFamily="DejaVu Sans, sans-serif"
      >
        SIMULIA
      </text>
    </svg>
  );
}

function PromptArea() {
  return (
    <div className="flex h-[34px] shrink-0 items-center border-t border-[#a4a4a4] bg-gradient-to-b from-white to-[#ebebeb] pl-[7px]">
      <button
        type="button"
        aria-label="Back"
        className="flex h-[22px] w-[19px] items-center justify-center rounded-[2px] border border-[#6a6a6a] bg-[#e6e6e6]"
      >
        <svg width="14" height="12" viewBox="0 0 14 12" aria-hidden="true">
          <path d="M0 6l6-5v3.500h8v3H6V11z" fill="#000" />
        </svg>
      </button>
      <button
        type="button"
        aria-label="Cancel"
        className="ml-1 flex h-[22px] w-[18px] items-center justify-center rounded-[2px] border border-[#6a6a6a] bg-[#e6e6e6]"
      >
        <svg width="12" height="13" viewBox="0 0 12 13" aria-hidden="true">
          <path d="M1 1l10 11M11 1L1 12" stroke="#f01010" strokeWidth="1.600" />
        </svg>
      </button>
      <span className="ml-[7px]">Sketch the section for the planar shell</span>
      <button
        type="button"
        className="ml-[7px] h-[21px] w-[34px] rounded-[2px] border border-[#2c628b] bg-gradient-to-b from-[#e8f5fc] to-[#a8dbf5] leading-4"
      >
        Done
      </button>
      <span className="flex-1" />
      <SimuliaLogo />
    </div>
  );
}

/* ---------- messages ---------- */

const messages = [
  "985 elements have been generated on part: Part-1",
  'The job input file "Job-1.inp" has been submitted for analysis.',
  "Job Job-1: Analysis Input File Processor completed successfully.",
  "Job Job-1: Abaqus/Standard completed successfully.",
  "Job Job-1 completed successfully.",
  "A new model database has been created.",
  'The model "Model-1" has been created.',
];

function MessageArea() {
  return (
    <div className="flex h-[98px] shrink-0 pl-[2px]">
      <div className="flex w-[38px] flex-col items-end">
        <button
          type="button"
          aria-label="Messages"
          className="flex h-[39px] w-[38px] items-center justify-center border border-r-0 border-[#8c8c96] bg-white"
        >
          <Pic size={22}>
            <path d="M2.500 1.500h17v18h-17z" fill="#d0d0c4" stroke="#555" />
            <path d="M3 2h16v9H3z" fill="#eeeee4" />
            <path d="M.5 21l2-6 6-4 2 3-5 6z" fill="#e0a030" stroke="#3a2a08" />
          </Pic>
        </button>
        <button
          type="button"
          aria-label="Command line"
          className="flex h-[35px] w-[36px] items-center justify-center border border-t-0 border-[#8c8c96] bg-[#dcdcdc]"
        >
          <Pic size={24}>
            <path d="M.5.5h23v23H.5z" fill="#f0d060" stroke="#111" />
            <path d="M5 8l4 4-4 4M11 8l4 4-4 4M17 8l4 4-4 4" stroke="#111" strokeWidth="1.400" />
          </Pic>
        </button>
      </div>
      <div className="ml-[1px] flex min-w-0 flex-1 border border-[#8c8c96] bg-white">
        <div
          role="log"
          className="min-w-0 flex-1 overflow-hidden pt-[4px] pl-1 font-['Liberation_Mono',monospace] text-[13px] leading-[13px] whitespace-pre"
        >
          {messages.map((m) => (
            <p key={m}>{m}</p>
          ))}
        </div>
        <div className="flex w-[15px] flex-col items-center bg-[#f0f0f0]">
          <span className="flex h-[18px] items-center">
            <svg width="7" height="4" aria-hidden="true"><path d="M0 4h7L3.500 0z" fill="#444" /></svg>
          </span>
          <span className="flex-1" />
          <span className="flex h-[13px] w-[14px] flex-col items-center justify-center gap-[2px] rounded-[2px] border border-[#979797] bg-[#e4e4e4]">
            <i className="h-[1px] w-[7px] bg-[#555]" />
            <i className="h-[1px] w-[7px] bg-[#555]" />
            <i className="h-[1px] w-[7px] bg-[#555]" />
          </span>
          <span className="flex h-[18px] items-center">
            <svg width="7" height="4" aria-hidden="true"><path d="M0 0h7L3.500 4z" fill="#444" /></svg>
          </span>
        </div>
      </div>
      <div className="flex w-[18px] items-end justify-end">
        <svg width="14" height="14" aria-hidden="true">
          <path d="M11 1h2v2h-2zM6 6h2v2H6zM11 6h2v2h-2zM1 11h2v2H1zM6 11h2v2H6zM11 11h2v2h-2z" fill="#a0a0a0" />
        </svg>
      </div>
    </div>
  );
}

/* ---------- menu bar ---------- */

const menus: [string, string, string][] = [
  ["", "F", "ile"],
  ["", "M", "odel"],
  ["Vie", "w", "port"],
  ["", "V", "iew"],
  ["", "E", "dit"],
  ["", "A", "dd"],
  ["", "T", "ools"],
  ["Plu", "g", "-ins"],
  ["", "H", "elp"],
];

function MenuBar() {
  return (
    <header className="flex h-[27px] shrink-0 items-center border-t-2 border-b border-t-[#44545c] border-b-[#b0b0b0] bg-gradient-to-r from-white to-[#f0f0f0] pt-[1px] pl-1">
      <Pic size={16}>
        <path d="M1.500 1.500h13v12h-13z" fill="#eef4ff" stroke="#2a5cb0" />
        <path d="M2 2h12v2H2z" fill="#4a80d0" />
        <circle cx="8" cy="8.500" r="4" fill="#1c2470" />
        <path d="M3 8.500h10" stroke="#fff" strokeWidth="1.500" />
      </Pic>
      <nav className="ml-[10px] flex gap-[17px]">
        {menus.map(([a, b, c]) => (
          <button key={a + b + c} type="button">
            {a}
            <span className="underline underline-offset-2">{b}</span>
            {c}
          </button>
        ))}
      </nav>
      <button type="button" aria-label="Context help" className="ml-[14px]">
        <Pic size={16}>
          <path d="M1 2v9l2-2 2 4 2-1-2-4h3z" fill="#000" />
          <text x="7" y="12" fontSize="11" fontWeight="bold" fill="#000" fontFamily="Liberation Sans, sans-serif">
            ?
          </text>
        </Pic>
      </button>
      <span className="flex-1" />
      <div className="mb-1 flex gap-[5px] pr-[5px]">
        {[
          ["Minimize", "M4 9.500h6"],
          ["Restore", "M3.500 6.500h5v4h-5zM6 4.500h4.500V8"],
          ["Close", "M4 4l6 6M10 4l-6 6"],
        ].map(([name, d]) => (
          <button
            key={name}
            type="button"
            aria-label={name}
            className="flex h-[14px] w-[15px] items-center justify-center border border-[#8ca0b4] bg-[#e2edf6]"
          >
            <Pic size={14}>
              <path d={d} stroke="#5c6c7c" strokeWidth="1.600" />
            </Pic>
          </button>
        ))}
      </div>
    </header>
  );
}

/* ---------- window ---------- */

export default function App() {
  return (
    <div className="flex h-screen flex-col overflow-hidden border-b border-[#30343a] bg-gradient-to-r from-[#fcfcfc] to-[#f0f0f0] font-['Noto_Sans',sans-serif] text-[11px] leading-4 text-black">
      <MenuBar />
      <div className="flex h-7 shrink-0">
        <ToolGroup tools={fileTools} />
        <ToolGroup tools={meshTools} />
        <div className="ml-[647px] flex">
          <ToolGroup tools={renderTools} />
        </div>
      </div>
      <div className="flex h-7 shrink-0 pl-[527px]">
        <ToolGroup tools={selectionTools}>
          <button type="button" aria-label="Select entities" className="flex w-[26px] justify-center">
            <Pic>
              <path d="M8.500 4v13l3-3 3 7 3-1.500-3-6h4z" stroke="#9c9c9c" fill="#f6f6f6" />
            </Pic>
          </button>
          <div className="flex h-[25px] w-[105px] border-2 border-[#9aa0a8] bg-[#b1cdeb]">
            <select aria-label="Selection filter" className="min-w-0 flex-1 appearance-none bg-transparent pl-[2px]">
              <option>All</option>
            </select>
            <DropArrow muted />
          </div>
          <button type="button" aria-label="Selection options" className="flex w-[25px] justify-center">
            <Pic>
              <path d="M3.500 4.500h11v10h-11z" fill="#e8e8e8" stroke="#9a9a9a" />
              <path d="M7 8h11v12H7z" fill="#8e8e8e" />
              <path d="M8 9h6v5H8z" fill="#707070" />
            </Pic>
          </button>
          <i className="mr-[1px] h-4 w-[1px] bg-[#a8a8a8]" />
        </ToolGroup>
        <ToolGroup tools={viewTools} />
        <ToolGroup tools={projectionTools} />
      </div>
      <div className="flex h-7 shrink-0 pl-[824px]">
        <ToolGroup tools={infoTools} />
      </div>
      <main className="flex min-h-0 flex-1 pl-[2px]">
        <LeftPanel />
        <section className="ml-1 flex min-w-0 flex-1 flex-col">
          <ContextBar />
          <div className="flex min-h-0 flex-1">
            <Toolbox />
            <SketchCanvas />
          </div>
          <PromptArea />
        </section>
      </main>
      <footer className="shrink-0 pt-1 pb-[3px]">
        <MessageArea />
      </footer>
    </div>
  );
}
